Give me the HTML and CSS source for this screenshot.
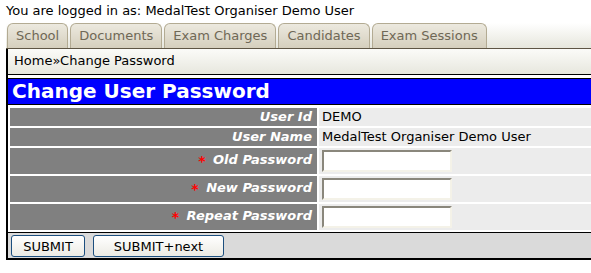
FILE: index.html
```html
<!DOCTYPE html>
<html lang="en">
<head>
    <meta charset="UTF-8">
    <title>Change User Password</title>
    <link rel="stylesheet" href="styles.css">
</head>
<body>
    <div class="page">
        <div class="login-info">You are logged in as: MedalTest Organiser Demo User</div>

        <div class="tabbar">
            <a class="tab">School</a>
            <a class="tab">Documents</a>
            <a class="tab">Exam Charges</a>
            <a class="tab">Candidates</a>
            <a class="tab">Exam Sessions</a>
        </div>

        <div class="panel">
            <div class="crumb">Home»Change Password</div>
            <h1 class="heading">Change User Password</h1>

            <form>
                <table class="form-table">
                    <tr class="row-short">
                        <th>User Id</th>
                        <td>DEMO</td>
                    </tr>
                    <tr class="row-short">
                        <th>User Name</th>
                        <td>MedalTest Organiser Demo User</td>
                    </tr>
                    <tr>
                        <th><span class="req">*</span> Old Password</th>
                        <td><input type="password" class="field"></td>
                    </tr>
                    <tr>
                        <th><span class="req">*</span> New Password</th>
                        <td><input type="password" class="field"></td>
                    </tr>
                    <tr>
                        <th><span class="req">*</span> Repeat Password</th>
                        <td><input type="password" class="field"></td>
                    </tr>
                </table>

                <div class="actions">
                    <button type="button" class="btn btn-submit">SUBMIT</button>
                    <button type="button" class="btn btn-next">SUBMIT+next</button>
                </div>
            </form>
        </div>
    </div>
</body>
</html>
```

FILE: styles.css
```css
* {
    margin: 0;
    padding: 0;
    box-sizing: border-box;
}

body {
    font-family: 'DejaVu Sans', Verdana, sans-serif;
    font-size: 13px;
    color: #000;
    background: white;
    overflow: hidden;
}

.page {
    margin-left: 6px;
    width: 600px;
}

.login-info {
    height: 23px;
    padding-top: 3px;
    line-height: 16px;
}

.tabbar {
    display: flex;
    align-items: flex-end;
    gap: 2px;
    height: 26px;
    padding-left: 1px;
    background: linear-gradient(#ffffff, #e6e6dc);
    border-bottom: 1px solid #5e5544;
}

.tab {
    height: 25px;
    padding: 4px 8px 0;
    color: #6f6856;
    border: 1px solid #b3ab93;
    border-bottom: none;
    border-radius: 6px 6px 0 0;
    background: linear-gradient(#ece9df, #d5cfbd);
    white-space: nowrap;
}

.panel {
    border-left: 2px solid #000;
}

.crumb {
    height: 26px;
    padding: 4px 6px 0;
    background: linear-gradient(#fbfbf8, #e7e7de);
    border-bottom: 1px solid #000;
}

.heading {
    margin-top: 3px;
    height: 27px;
    padding: 0 4px;
    background: #0000ff;
    color: white;
    font-size: 20px;
    font-weight: bold;
    line-height: 25px;
    border-top: 1px solid #000;
    border-bottom: 1px solid #000;
}

.form-table {
    width: 100%;
    border-collapse: separate;
    border-spacing: 2px;
    margin-top: 1px;
}

.form-table th {
    width: 307px;
    height: 26px;
    padding: 0 5px 2px;
    background: #808080;
    color: white;
    font-style: italic;
    font-weight: bold;
    text-align: right;
}

.form-table td {
    height: 26px;
    padding: 0 3px;
    background: #ececec;
}

.form-table .row-short th,
.form-table .row-short td {
    height: 18px;
    padding-bottom: 1px;
}

.req {
    color: #ff0000;
    font-size: 14px;
    font-style: normal;
    vertical-align: -2px;
    margin-right: 3px;
}

.field {
    display: block;
    width: 130px;
    height: 22px;
    border: 2px solid;
    border-color: #8a877c #f4f2e8 #f4f2e8 #8a877c;
    background: white;
}

.actions {
    display: flex;
    gap: 8px;
    height: 28px;
    padding: 2px 3px;
    background: #dadada;
    border-top: 1px solid #000;
    border-bottom: 2px solid #000;
}

.btn {
    height: 22px;
    font-family: 'DejaVu Sans', Verdana, sans-serif;
    font-size: 13px;
    color: #000;
    border: 1px solid #1c4f7f;
    border-radius: 3px;
    background: linear-gradient(#ffffff, #ecebe4);
}

.btn-submit {
    width: 74px;
}

.btn-next {
    width: 131px;
}
```
